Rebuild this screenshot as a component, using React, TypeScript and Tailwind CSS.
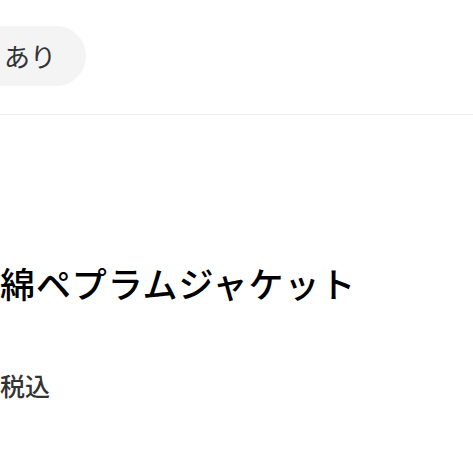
import React from 'react';

const App = () => {
  return (
    <div
      className="w-[473px] h-[473px] bg-white overflow-hidden text-black"
      style={{ fontFamily: '"Noto Sans CJK JP", "Noto Sans", sans-serif' }}
    >
      <div className="pt-[26px] pb-[28px] border-b border-[#ececec]">
        <div className="-ml-[40px] inline-flex items-center h-[60px] pl-[44px] pr-[30px] rounded-full bg-[#f4f4f4]">
          <span className="text-[26px] leading-none text-[#333]">あり</span>
        </div>
      </div>

      <div className="pt-[150px]">
        <h1 className="text-[35px] leading-none font-medium tracking-[0.9px] whitespace-nowrap">
          綿ペプラムジャケット
        </h1>
        <p className="mt-[73px] text-[25px] leading-none font-medium text-[#333]">税込</p>
      </div>
    </div>
  );
};

export default App;
